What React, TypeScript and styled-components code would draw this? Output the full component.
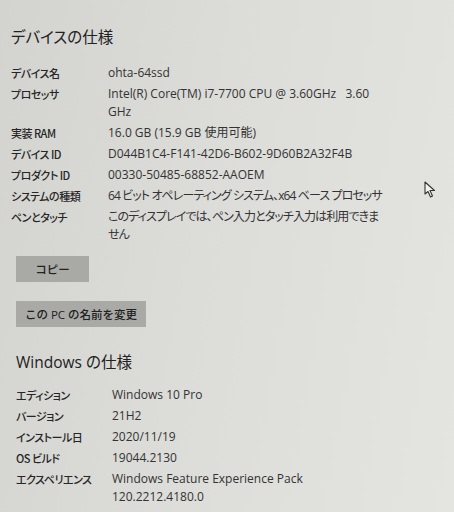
import styled, { createGlobalStyle } from "styled-components";

const GlobalStyle = createGlobalStyle`
  html, body {
    margin: 0;
    padding: 0;
  }
  body {
    font-family: "Open Sans", "Noto Sans CJK JP", sans-serif;
    color: #2b2b2b;
  }
`;

const Page = styled.div`
  position: relative;
  width: 454px;
  height: 512px;
  overflow: hidden;
  background: linear-gradient(100deg, #d3d3d0 0%, #dcdcd9 45%, #e4e4e1 100%);
  font-feature-settings: "palt";
`;

const Section = styled.section<{ $left: number; $col: number }>`
  padding-left: ${(p) => p.$left}px;
  display: flex;
  flex-direction: column;
  --col: ${(p) => p.$col}px;
`;

const Heading = styled.h2<{ $top: number }>`
  margin: ${(p) => p.$top}px 0 0 0;
  font-family: "Open Sans", "Noto Sans CJK JP", sans-serif;
  font-weight: 400;
  font-size: 15.5px;
  line-height: 22px;
  color: #222;
`;

const Rows = styled.div<{ $top: number }>`
  margin-top: ${(p) => p.$top}px;
  display: flex;
  flex-direction: column;
`;

const Row = styled.div`
  display: grid;
  grid-template-columns: var(--col) 1fr;
  font-size: 12px;
  line-height: 18px;
  margin-bottom: 3px;
`;

const Label = styled.div`
  font-family: "Noto Sans CJK JP", sans-serif;
  font-weight: 500;
  font-size: 11px;
  letter-spacing: -0.5px;
  color: #262626;
`;

const Value = styled.div<{ $jp?: boolean; $nowrap?: boolean }>`
  font-family: "Open Sans", "Noto Sans CJK JP", sans-serif;
  color: #333;
  width: 272px;
  white-space: ${(p) => (p.$nowrap ? "nowrap" : "pre-wrap")};
  letter-spacing: ${(p) => (p.$jp ? "-0.9px" : "0")};
`;

const Button = styled.button<{ $width: number; $top: number }>`
  margin-top: ${(p) => p.$top}px;
  width: ${(p) => p.$width}px;
  height: 26px;
  border: none;
  background: #a9a9a6;
  font-family: "Open Sans", "Noto Sans CJK JP", sans-serif;
  font-size: 11.5px;
  font-weight: 500;
  color: #222;
  padding: 0;
  align-self: flex-start;
`;

const Cursor = styled.svg`
  position: absolute;
  left: 424px;
  top: 181px;
`;

type Spec = { k: string; v: string; jp?: boolean; nowrap?: boolean };

const device: Spec[] = [
  { k: "デバイス名", v: "ohta-64ssd" },
  { k: "プロセッサ", v: "Intel(R) Core(TM) i7-7700 CPU @ 3.60GHz   3.60 GHz" },
  { k: "実装 RAM", v: "16.0 GB (15.9 GB 使用可能)" },
  { k: "デバイス ID", v: "D044B1C4-F141-42D6-B602-9D60B2A32F4B" },
  { k: "プロダクト ID", v: "00330-50485-68852-AAOEM" },
  { k: "システムの種類", v: "64 ビット オペレーティング システム、x64 ベース プロセッサ", jp: true, nowrap: true },
  { k: "ペンとタッチ", v: "このディスプレイでは、ペン入力とタッチ入力は利用できません", jp: true },
];

const windows: Spec[] = [
  { k: "エディション", v: "Windows 10 Pro" },
  { k: "バージョン", v: "21H2" },
  { k: "インストール日", v: "2020/11/19" },
  { k: "OS ビルド", v: "19044.2130" },
  { k: "エクスペリエンス", v: "Windows Feature Experience Pack 120.2212.4180.0" },
];

const SpecRows = ({ items, top }: { items: Spec[]; top: number }) => (
  <Rows $top={top}>
    {items.map((s) => (
      <Row key={s.k}>
        <Label>{s.k}</Label>
        <Value $jp={s.jp} $nowrap={s.nowrap}>{s.v}</Value>
      </Row>
    ))}
  </Rows>
);

export default function App() {
  return (
    <>
      <GlobalStyle />
      <Page>
        <Section $left={11} $col={97}>
          <Heading $top={26}>デバイスの仕様</Heading>
          <SpecRows items={device} top={16} />
        </Section>
        <Section $left={16} $col={96}>
          <Button $width={73} $top={9}>コピー</Button>
          <Button $width={130} $top={19}>この PC の名前を変更</Button>
          <Heading $top={24}>Windows の仕様</Heading>
          <SpecRows items={windows} top={13} />
        </Section>
        <Cursor width="12" height="17" viewBox="0 0 12 17">
          <path
            d="M1 1 L1 13 L4 10.5 L6.5 16 L8.5 15 L6 9.5 L10.5 9.5 Z"
            fill="#f2f2f0"
            stroke="#333"
            strokeWidth="1.1"
            strokeLinejoin="round"
          />
        </Cursor>
      </Page>
    </>
  );
}
